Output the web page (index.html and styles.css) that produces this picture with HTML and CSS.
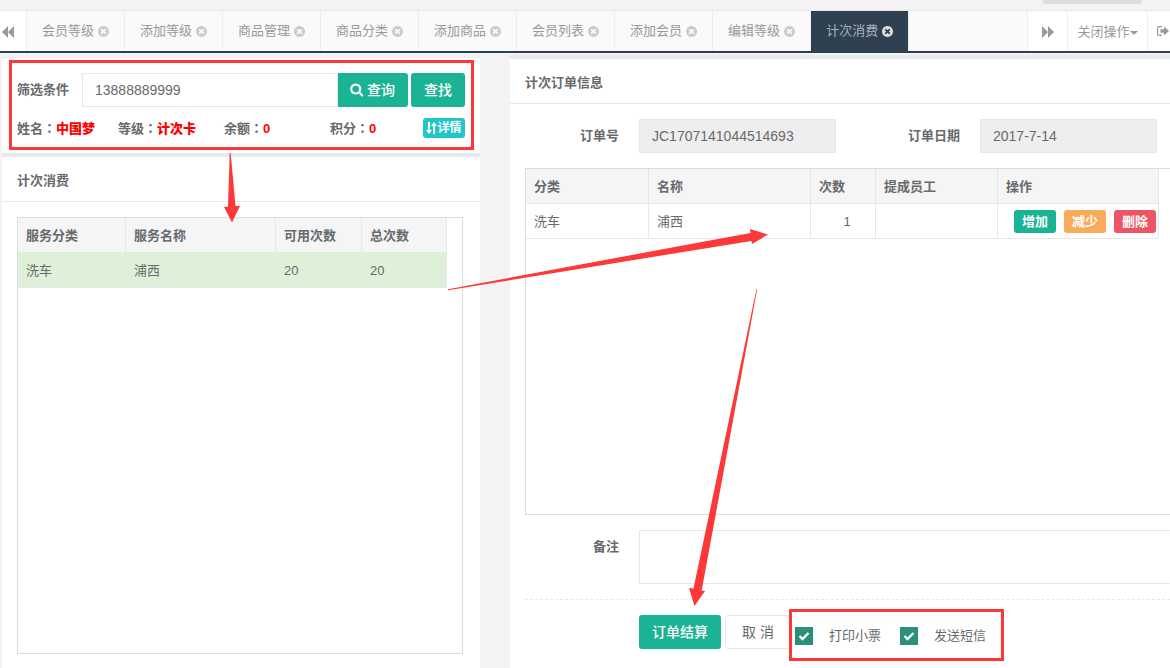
FILE: index.html
```html
<!DOCTYPE html>
<html lang="zh-CN">
<head>
<meta charset="utf-8">
<title>计次消费</title>
<link rel="stylesheet" href="styles.css">
</head>
<body>
<svg class="sprite" aria-hidden="true">
  <symbol id="i-close" viewBox="128 128 1536 1536"><path d="M1277 1122q0-26-19-45l-181-181 181-181q19-19 19-45 0-27-19-46l-90-90q-19-19-46-19-26 0-45 19l-181 181-181-181q-19-19-45-19-27 0-46 19l-90 90q-19 19-19 46 0 26 19 45l181 181-181 181q-19 19-19 45 0 27 19 46l90 90q19 19 46 19 26 0 45-19l181-181 181 181q19 19 45 19 27 0 46-19l90-90q19-19 19-46zm387-226q0 209-103 385.5t-279.5 279.5-385.5 103-385.5-103-279.5-279.5-103-385.5 103-385.5 279.5-279.5 385.5-103 385.5 103 279.5 279.5 103 385.5z"/></symbol>
  <symbol id="i-search" viewBox="64 64 1728 1792"><path d="M1216 832q0-185-131.500-316.500t-316.500-131.500-316.500 131.500-131.500 316.500 131.500 316.500 316.500 131.500 316.500-131.500 131.500-316.500zm512 832q0 52-38 90t-90 38q-54 0-90-38l-343-342q-179 124-399 124-143 0-273.500-55.500t-225-150-150-225-55.500-273.500 55.500-273.500 150-225 225-150 273.500-55.500 273.500 55.500 225 150 150 225 55.500 273.500q0 220-124 399l343 343q37 37 37 90z"/></symbol>
  <symbol id="i-back" viewBox="0 0 12 12"><path d="M6 0v12L0 6zM12 0v12L6 6z"/></symbol>
  <symbol id="i-fwd" viewBox="0 0 12 12"><path d="M0 0v12l6-6zM6 0v12l6-6z"/></symbol>
  <symbol id="i-exit" viewBox="0 0 12 10"><path d="M5 .6H2Q.6.600.6 2v6Q.6 9.400 2 9.400h3" fill="none" stroke="currentColor" stroke-width="1.200"/><path d="M3.500 3.200H7V.5L12 5 7 9.500V6.800H3.500z"/></symbol>
  <symbol id="i-sort" viewBox="0 0 11 12"><path d="M2 0h2v8h2l-3 4-3-4h2zM7 12h2V4h2L8 0 5 4h2z"/></symbol>
  <symbol id="i-check" viewBox="0 0 18 18"><path d="M4.500 9l3 3 6-6" fill="none" stroke="currentColor" stroke-width="2.400"/></symbol>
</svg>

<header class="topbar"><div class="top-pill"></div></header>

<nav class="tabs">
  <button class="nav-btn nav-left" aria-label="向左"><svg class="ico12"><use href="#i-back"/></svg></button>
  <div class="tab-list">
    <a class="tab" href="#">会员等级<svg class="ico11"><use href="#i-close"/></svg></a>
    <a class="tab" href="#">添加等级<svg class="ico11"><use href="#i-close"/></svg></a>
    <a class="tab" href="#">商品管理<svg class="ico11"><use href="#i-close"/></svg></a>
    <a class="tab" href="#">商品分类<svg class="ico11"><use href="#i-close"/></svg></a>
    <a class="tab" href="#">添加商品<svg class="ico11"><use href="#i-close"/></svg></a>
    <a class="tab" href="#">会员列表<svg class="ico11"><use href="#i-close"/></svg></a>
    <a class="tab" href="#">添加会员<svg class="ico11"><use href="#i-close"/></svg></a>
    <a class="tab" href="#">编辑等级<svg class="ico11"><use href="#i-close"/></svg></a>
    <a class="tab active" href="#">计次消费<svg class="ico11"><use href="#i-close"/></svg></a>
  </div>
  <button class="nav-btn nav-right" aria-label="向右"><svg class="ico12"><use href="#i-fwd"/></svg></button>
  <button class="nav-btn nav-menu">关闭操作<span class="caret"></span></button>
  <button class="nav-btn nav-exit" aria-label="退出"><svg class="ico-exit"><use href="#i-exit"/></svg></button>
</nav>

<main class="content">
  <div class="col-left">
    <section class="filter">
      <div class="search-row">
        <label for="kw">筛选条件</label>
        <input class="field search-input" id="kw" type="text" value="13888889999">
        <button class="btn primary btn-query"><svg class="ico14"><use href="#i-search"/></svg>查询</button>
        <button class="btn primary btn-find">查找</button>
      </div>
      <div class="member-row">
        <span class="m-name">姓名<span class="colon" lang="zh-TW">：</span><b>中国梦</b></span>
        <span class="m-cell">等级<span class="colon" lang="zh-TW">：</span><b>计次卡</b></span>
        <span class="m-cell">余额<span class="colon" lang="zh-TW">：</span><b>0</b></span>
        <span class="m-last">积分<span class="colon" lang="zh-TW">：</span><b>0</b></span>
        <button class="btn-detail"><svg class="ico-sort"><use href="#i-sort"/></svg>详情</button>
      </div>
    </section>
    <section class="panel">
      <h5>计次消费</h5>
      <div class="panel-body">
        <div class="grid-box">
          <table class="grid services">
            <colgroup><col class="w108"><col class="w150"><col class="w86"><col class="w85"></colgroup>
            <thead><tr><th>服务分类</th><th>服务名称</th><th>可用次数</th><th>总次数</th></tr></thead>
            <tbody><tr class="selected"><td>洗车</td><td>浦西</td><td>20</td><td>20</td></tr></tbody>
          </table>
        </div>
      </div>
    </section>
  </div>

  <section class="panel order">
    <h5>计次订单信息</h5>
    <div class="panel-body">
      <div class="form-row">
        <label class="lbl" for="no">订单号</label>
        <input class="field readonly f-no" id="no" type="text" value="JC1707141044514693" readonly>
        <label class="lbl lbl-date" for="date">订单日期</label>
        <input class="field readonly f-date" id="date" type="text" value="2017-7-14" readonly>
      </div>
      <div class="grid-box">
        <table class="grid items">
          <colgroup><col class="w123"><col class="w162"><col class="w65"><col class="w122"><col class="w161"></colgroup>
          <thead><tr><th>分类</th><th>名称</th><th>次数</th><th>提成员工</th><th>操作</th></tr></thead>
          <tbody><tr><td>洗车</td><td>浦西</td><td class="count">1</td><td></td>
            <td class="ops"><div class="op-list"><button class="op green">增加</button><button class="op orange">减少</button><button class="op red">删除</button></div></td></tr></tbody>
        </table>
      </div>
      <div class="note-row">
        <label class="lbl" for="note">备注</label>
        <textarea class="note" id="note"></textarea>
      </div>
      <div class="actions">
        <button class="btn primary btn-pay">订单结算</button>
        <button class="btn plain">取 消</button>
        <label class="check"><span class="box"><input type="checkbox" checked><svg class="tick"><use href="#i-check"/></svg></span>打印小票</label>
        <label class="check"><span class="box"><input type="checkbox" checked><svg class="tick"><use href="#i-check"/></svg></span>发送短信</label>
      </div>
    </div>
  </section>
</main>

<svg class="marks" width="1170" height="668" viewBox="0 0 1170 668" aria-hidden="true">
  <rect x="10.500" y="61.500" width="462" height="87"/>
  <rect x="790.500" y="610.500" width="212" height="49"/>
  <path d="M229.700 153H230.700L235.500 206H240L232 222.500L224 207L228 206.500Z"/>
  <path d="M448 289.300L680 246L750.500 233L750 229L768 234.500L752 244L751.500 241L680 252.500L448 290.300Z"/>
  <path d="M756.500 289H757.200L701.700 590.500L705 591L694.500 606L689 588L693.500 588.500Z"/>
</svg>
</body>
</html>
```
FILE: styles.css
```css
* { box-sizing: border-box; }

body {
  margin: 0;
  min-height: 100vh;
  display: flex;
  flex-direction: column;
  background: #f3f3f4;
  color: #676a6c;
  font: 13px/20px "Liberation Sans", "Noto Sans CJK SC", sans-serif;
  overflow-x: hidden;
}

button, input, textarea { font: inherit; color: inherit; margin: 0; }
button { border: 0; padding: 0; cursor: pointer; white-space: nowrap; }
svg { fill: currentColor; flex: none; }
.sprite { position: absolute; width: 0; height: 0; }

.ico11 { width: 11px; height: 11px; }
.ico12 { width: 12px; height: 12px; }
.ico14 { width: 14px; height: 14px; }
.ico-exit { width: 12px; height: 10px; }
.ico-sort { width: 11px; height: 12px; }

.topbar { height: 10px; padding-right: 28px; display: flex; justify-content: flex-end; }
.top-pill { width: 99px; height: 4px; background: #ddd; border-radius: 0 0 3px 3px; }

.tabs {
  display: flex;
  height: 43px;
  border-top: 1px solid #e7e7e7;
  border-bottom: 2px solid #2f4050;
  background: #fafafa;
  color: #999;
}
.nav-btn { display: flex; align-items: center; justify-content: center; background: #fff; }
.nav-left { width: 27px; padding: 2px 10px 0 0; border-right: 1px solid #eee; }
.nav-right { width: 40px; padding-top: 2px; border-left: 1px solid #eee; }
.nav-menu { width: 80px; padding-top: 2px; border-left: 1px solid #eee; }
.nav-exit { width: 23px; padding-left: 8px; border-left: 1px solid #eee; }
.tab-list { flex: 1; min-width: 0; display: flex; overflow: hidden; }
.tab {
  display: flex;
  align-items: center;
  gap: 4px;
  padding: 0 15px;
  border-right: 1px solid #eee;
  color: #999;
  text-decoration: none;
  white-space: nowrap;
}
.tab svg { color: #ccc; }
.tab.active { background: #2f4050; color: #a7b1c2; }
.tab.active svg { color: #ddd; }
.caret { border: 4px solid transparent; border-top-color: #999; border-bottom: 0; margin-top: 2px; }

.content { flex: 1; display: flex; gap: 30px; padding: 2px 0 0 2px; }
.col-left { flex: none; width: 478px; padding-top: 2px; display: flex; flex-direction: column; }

.filter { padding: 15px; height: 96px; background: #fff; border-top: 1px solid #e7eaec; }
.search-row { display: flex; align-items: center; }
.search-row label { font-weight: 700; width: 65px; }
.field { height: 34px; padding: 0 12px; border: 1px solid #e5e6e7; border-radius: 1px; background: #fff; font-size: 14px; min-width: 0; }
.readonly { background: #eee; }
.search-input { flex: 1; }
.btn { height: 34px; border-radius: 3px; font-size: 14px; display: flex; align-items: center; justify-content: center; gap: 3px; }
.primary { background: #1ab394; color: #fff; font-weight: 500; }
.btn-query { width: 70px; padding-right: 1px; border-radius: 0 3px 3px 0; }
.btn-find { width: 54px; margin-left: 3px; }
.member-row { display: flex; align-items: center; height: 20px; margin-top: 11px; font-weight: 700; }
.member-row > span { padding-top: 2px; }
.member-row b { color: #f00; }
.colon { font-family: "Noto Sans CJK TC", sans-serif; line-height: 1; }
.m-name { width: 101px; }
.m-cell { width: 106px; }
.m-last { flex: 1; }
.btn-detail { display: flex; align-items: center; justify-content: center; width: 42px; height: 20px; border-radius: 3px; background: #23c6c8; color: #fff; font-size: 12px; }

.panel { flex: 1; min-width: 0; display: flex; flex-direction: column; border-top: 4px solid #e7eaec; background: #fff; }
.panel h5 { margin: 0; padding: 14px 15px 10px; border-bottom: 1px solid #e7eaec; font-size: 13px; line-height: 20px; }
.panel-body { flex: 1; display: flex; flex-direction: column; padding: 15px; }
.col-left .panel-body { padding-right: 17px; padding-bottom: 14px; }
.grid-box { flex: 1; border: 1px solid #ddd; overflow: hidden; }

.grid { border-collapse: separate; border-spacing: 0; table-layout: fixed; }
.services { width: 429px; }
.items { width: 633px; }
.grid th, .grid td { height: 35px; padding: 2px 8px 0; border: 0 solid #e7e7e7; border-width: 0 1px 1px 0; text-align: left; }
.grid th { background: #f5f5f6; }
.selected td { background: #dff0d8; }
.grid .count { padding-left: 16px; text-align: center; }
.w65 { width: 65px; }
.w85 { width: 85px; }
.w86 { width: 86px; }
.w108 { width: 108px; }
.w122 { width: 122px; }
.w123 { width: 123px; }
.w150 { width: 150px; }
.w161 { width: 161px; }
.w162 { width: 162px; }
.grid .ops { padding: 0 2px; }
.op-list { display: flex; justify-content: flex-end; gap: 8px; }
.op { width: 42px; height: 23px; padding-top: 2px; border-radius: 3px; color: #fff; font-weight: 700; }
.green { background: #1ab394; }
.orange { background: #f8ac59; }
.red { background: #ed5565; }

.order .panel-body { padding-right: 0; }
.order .grid-box { flex: none; height: 347px; border-right: 0; }
.form-row { display: flex; align-items: center; margin-bottom: 15px; }
.lbl { flex: none; width: 114px; padding-right: 20px; text-align: right; font-weight: 700; }
.lbl-date { width: 144px; }
.f-no { flex: 1 1 197px; }
.f-date { flex: 1 1 177px; margin-right: 13px; }
.note-row { display: flex; margin-top: 15px; }
.note-row .lbl { padding-top: 7px; }
.note { flex: 1; height: 54px; border: 1px solid #e5e6e7; border-right: 0; border-radius: 1px; resize: none; display: block; }
.actions { display: flex; align-items: center; margin-top: 15px; padding: 15px 0 0 114px; border-top: 1px dashed #e7eaec; }
.btn-pay { width: 82px; }
.plain { width: 66px; margin-left: 4px; border: 1px solid #e7eaec; background: #fff; }
.check { display: flex; align-items: center; gap: 16px; margin-left: 4px; padding-top: 8px; }
.check + .check { margin-left: 19px; }
.box { display: grid; color: #fff; }
.box > * { grid-area: 1 / 1; width: 18px; height: 18px; }
.box input { appearance: none; background: #ddd; }
.box input:checked { background: #2b8f7b; }
.tick { pointer-events: none; visibility: hidden; }
.box input:checked + .tick { visibility: visible; }

.marks { position: absolute; left: 0; top: 0; pointer-events: none; fill: #fc3838; }
.marks rect { fill: none; stroke: #fc3838; stroke-width: 3px; }
```
